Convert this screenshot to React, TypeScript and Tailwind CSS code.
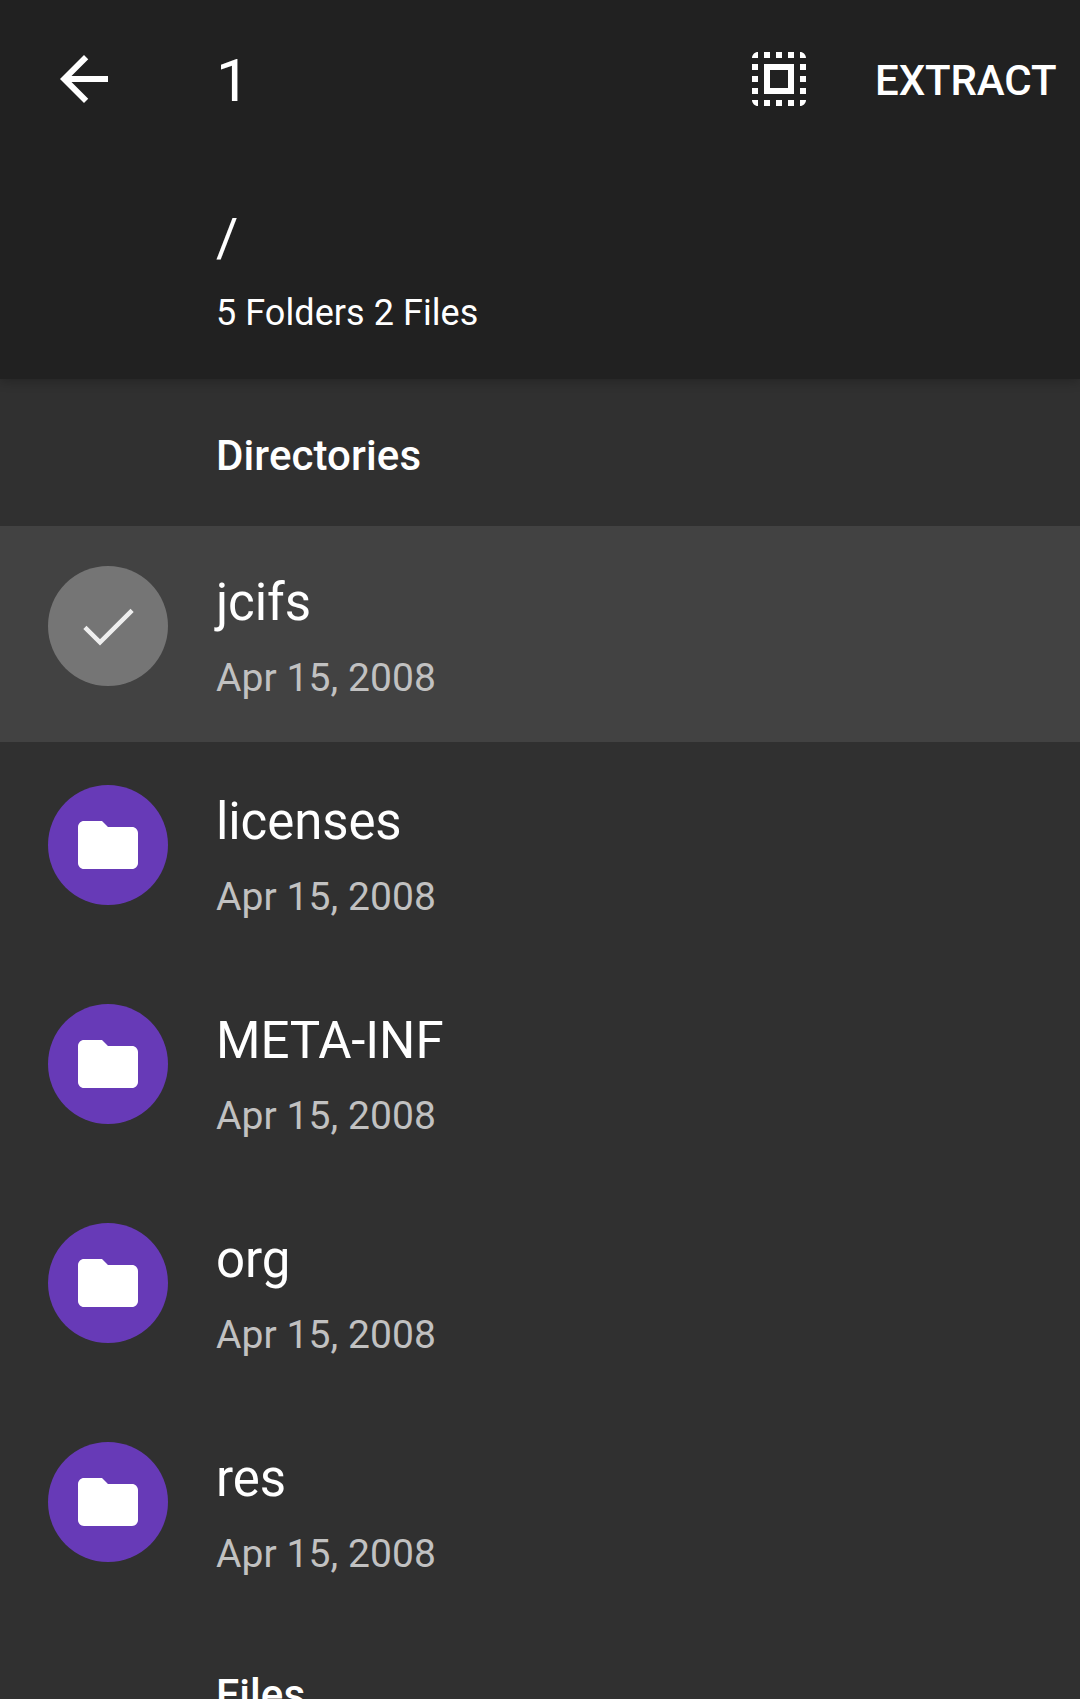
const rows = ['jcifs', 'licenses', 'META-INF', 'org', 'res'];

function Row({ name, selected }: { name: string; selected: boolean }) {
  return (
    <div className="h-[219px] shrink-0">
      <div className={`flex h-[216px] pl-12 ${selected ? 'bg-[#424242]' : ''}`}>
        <div className={`mt-10 flex size-[120px] items-center justify-center rounded-full ${selected ? 'bg-[#757575]' : 'bg-[#673ab7]'}`}>
          {selected ? (
            <svg viewBox="0 0 120 120" className="size-[120px]" fill="none" stroke="#eeeeee" strokeWidth="4.5">
              <path d="M36.9 61.3 52 76.4 84.1 44.3" />
            </svg>
          ) : (
            <svg viewBox="0 0 24 24" className="size-[72px]" fill="#fff">
              <path d="M10 4H4c-1.1 0-1.99.9-1.99 2L2 18c0 1.1.9 2 2 2h16c1.1 0 2-.9 2-2V8c0-1.1-.9-2-2-2h-8l-2-2z" />
            </svg>
          )}
        </div>
        <div className="ml-12 pt-[45px]">
          <div className="h-[64px] text-[51px] leading-[64px] tracking-[-0.1px] text-white">{name}</div>
          <div className="mt-[19px] h-[48px] text-[39px] leading-[48px] tracking-[0.08px] text-[#c1c1c1]">Apr 15, 2008</div>
        </div>
      </div>
    </div>
  );
}

export default function App() {
  return (
    <div className="flex h-[1699px] w-[1080px] flex-col overflow-hidden bg-[#303030] font-[Roboto,sans-serif] text-white">
      <header className="h-[379px] shrink-0 bg-[#212121] shadow-[0_3px_10px_rgba(0,0,0,0.22)]">
        <div className="flex h-[158px] items-center pl-12 pr-6">
          <svg viewBox="0 0 24 24" className="size-[72px]" fill="#fff">
            <path d="M20 11H7.83l5.59-5.59L12 4l-8 8 8 8 1.41-1.41L7.83 13H20v-2z" />
          </svg>
          <span className="ml-24 pt-[4px] text-[60px] leading-[70px]">1</span>
          <svg viewBox="0 0 24 24" className="ml-auto size-[72px]" fill="#fff">
            <path d="M3 5h2V3c-1.1 0-2 .9-2 2zm0 8h2v-2H3v2zm4 8h2v-2H7v2zM3 9h2V7H3v2zm10-6h-2v2h2V3zm6 0v2h2c0-1.1-.9-2-2-2zM5 21v-2H3c0 1.1.9 2 2 2zm-2-4h2v-2H3v2zM9 3H7v2h2V3zm2 18h2v-2h-2v2zm8-8h2v-2h-2v2zm0 8c1.1 0 2-.9 2-2h-2v2zm0-12h2V7h-2v2zm0 8h2v-2h-2v2zm-4 4h2v-2h-2v2zm0-16h2V3h-2v2zM7 17h10V7H7v10zm2-8h6v6H9V9z" />
          </svg>
          <span className="ml-[60px] w-[181px] whitespace-nowrap pt-[4px] text-[42px] font-medium leading-[50px] tracking-[-0.1px]">EXTRACT</span>
        </div>
        <div className="ml-[216px] mt-[48px] h-[64px] text-[54px] leading-[64px]">/</div>
        <div className="ml-[216px] mt-[22px] h-[42px] text-[36px] leading-[42px] tracking-[0.06px]">5 Folders 2 Files</div>
      </header>
      <h2 className="h-[147px] shrink-0 pl-[216px] pt-[52px] text-[42px] font-medium leading-[50px] tracking-[0.1px]">Directories</h2>
      {rows.map((name, i) => (
        <Row key={name} name={name} selected={i === 0} />
      ))}
      <h2 className="shrink-0 pl-[216px] pt-[49px] text-[42px] font-medium leading-[50px] tracking-[0.1px]">Files</h2>
    </div>
  );
}
